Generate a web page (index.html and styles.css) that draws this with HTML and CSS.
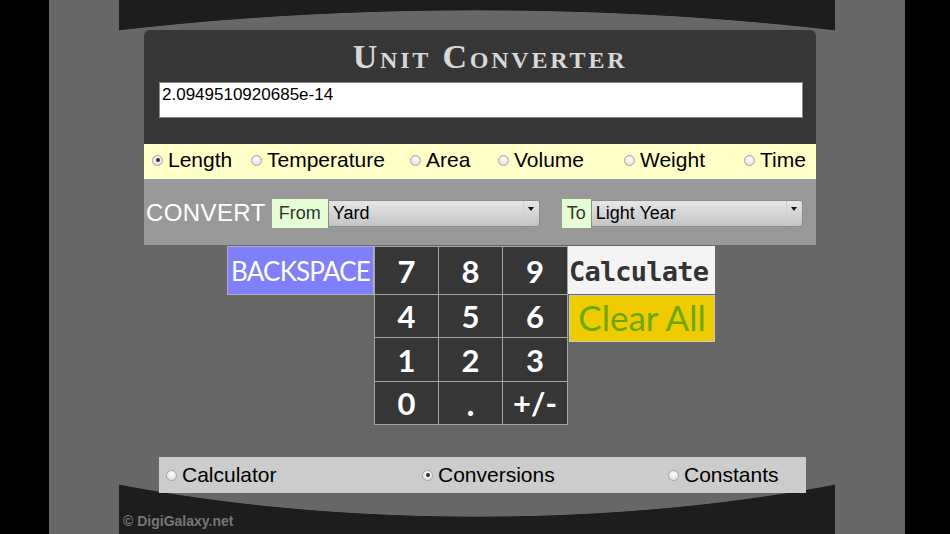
FILE: index.html
```html
<!DOCTYPE html>
<html lang="en">

<head>
    <meta charset="UTF-8">
    <meta name="viewport" content="width=device-width, initial-scale=1.0">
    <title>Unit Converter</title>
    <link rel="stylesheet" href="styles.css">
</head>

<body>
    <div class="screen">
        <div class="frame">
            <div class="app">
                <div class="header">
                    <h1 class="title">Unit Converter</h1>
                    <div class="display">2.0949510920685e-14</div>
                </div>

                <div class="types">
                    <label class="opt"><span class="radio on"></span>Length</label>
                    <label class="opt"><span class="radio"></span>Temperature</label>
                    <label class="opt"><span class="radio"></span>Area</label>
                    <label class="opt"><span class="radio"></span>Volume</label>
                    <label class="opt"><span class="radio"></span>Weight</label>
                    <label class="opt"><span class="radio"></span>Time</label>
                </div>

                <div class="convert">
                    <span class="convert-label">CONVERT</span>
                    <span class="tag">From</span>
                    <div class="select">
                        <span>Yard</span>
                        <span class="arrow"></span>
                    </div>
                    <span class="tag to">To</span>
                    <div class="select">
                        <span>Light Year</span>
                        <span class="arrow"></span>
                    </div>
                </div>
            </div>

            <div class="pad">
                <button class="backspace">BACKSPACE</button>
                <div class="keys">
                    <button class="key">7</button>
                    <button class="key">8</button>
                    <button class="key">9</button>
                    <button class="key">4</button>
                    <button class="key">5</button>
                    <button class="key">6</button>
                    <button class="key">1</button>
                    <button class="key">2</button>
                    <button class="key">3</button>
                    <button class="key">0</button>
                    <button class="key dot">.</button>
                    <button class="key">+/-</button>
                </div>
                <div class="actions">
                    <button class="calculate">Calculate</button>
                    <button class="clear">Clear All</button>
                </div>
            </div>

            <div class="modes">
                <label class="opt"><span class="radio"></span>Calculator</label>
                <label class="opt"><span class="radio on"></span>Conversions</label>
                <label class="opt"><span class="radio"></span>Constants</label>
            </div>

            <div class="copyright">© DigiGalaxy.net</div>
        </div>
    </div>
</body>

</html>
```

FILE: styles.css
```css
* {
    box-sizing: border-box;
}

body {
    margin: 0;
    background-color: black;
    font-family: "Liberation Sans", Arial, sans-serif;
}

.screen {
    width: 856px;
    height: 534px;
    margin-left: 49px;
    background-color: #676767;
    overflow: hidden;
}

/* dark band with the grey oval cut out of it, top and bottom curves differ */
.frame {
    width: 716px;
    height: 534px;
    margin-left: 70px;
    padding-top: 30px;
    background:
        radial-gradient(ellipse 921px 254px at 358px 264px, #676767 99.7%, #1d1d1d 100%) 0 0 / 716px 264px no-repeat,
        radial-gradient(ellipse 737px 254px at 358px -1px, #676767 99.7%, #1d1d1d 100%) 0 264px / 716px 270px no-repeat;
}

.app {
    width: 672px;
    margin-left: 25px;
}

.header {
    height: 114px;
    background-color: #363636;
    border-radius: 6px 6px 0 0;
    padding: 9px 13px 0 15px;
}

.title {
    margin: 0 0 7px 18px;
    text-align: center;
    font-family: "Liberation Serif", serif;
    font-variant: small-caps;
    font-weight: bold;
    font-size: 34px;
    line-height: 36px;
    letter-spacing: 2.8px;
    color: #d8d8d8;
}

.display {
    height: 36px;
    background-color: white;
    border: 1px solid #8a8a8a;
    padding: 2px 2px;
    font-size: 17px;
    line-height: 20px;
    color: black;
}

/* radio rows */
.opt {
    display: flex;
    align-items: center;
    font-size: 21px;
    color: black;
}

.radio {
    width: 11px;
    height: 11px;
    margin-right: 5px;
    border-radius: 50%;
    border: 1px solid #a5a5a5;
    background: radial-gradient(circle at 50% 35%, #ffffff, #d8d8d8);
    display: flex;
    align-items: center;
    justify-content: center;
}

.radio.on::after {
    content: "";
    width: 4px;
    height: 4px;
    border-radius: 50%;
    background-color: #333;
}

.types {
    height: 35px;
    background-color: #ffffc8;
    display: grid;
    grid-template-columns: 99px 159px 88px 126px 120px auto;
    align-items: center;
    padding: 0 0 3px 8px;
}

.convert {
    height: 66px;
    background-color: #999999;
    display: flex;
    align-items: center;
    padding: 2px 0 0 2px;
}

.convert-label {
    font-size: 24px;
    letter-spacing: 0.4px;
    color: white;
    margin-right: 6px;
}

.tag {
    height: 29px;
    padding: 0 7px;
    background-color: #e4fdd2;
    color: #333;
    font-size: 18px;
    line-height: 29px;
}

.tag.to {
    margin-left: 22px;
    padding: 0 5px;
}

.select {
    width: 212px;
    height: 27px;
    display: flex;
    justify-content: space-between;
    align-items: center;
    padding-left: 4px;
    background: linear-gradient(#e6e6e6, #c4c4c4);
    border: 1px solid #8c8c8c;
    border-radius: 0 3px 3px 0;
    font-size: 18px;
    color: black;
}

.arrow {
    width: 16px;
    height: 25px;
    border-left: 1px solid #cfcfcf;
    position: relative;
}

.arrow::after {
    content: "";
    position: absolute;
    top: 6px;
    left: 4px;
    border-left: 3px solid transparent;
    border-right: 3px solid transparent;
    border-top: 4px solid #111;
}

/* keypad */
.pad {
    display: flex;
    align-items: flex-start;
    margin: 1px 0 0 108px;
}

button {
    font-family: Lato, "Liberation Sans", sans-serif;
    padding: 0;
    margin: 0;
}

.backspace {
    width: 147px;
    height: 49px;
    background-color: #8080ff;
    border: 1px solid #b0b0b0;
    color: white;
    font-size: 26px;
    letter-spacing: -0.8px;
    white-space: nowrap;
}

.keys {
    width: 194px;
    display: grid;
    grid-template-columns: 63px 63px 64px;
    grid-template-rows: 47px 42px 43px 42px;
    gap: 1px;
    padding: 1px;
    background-color: #a6a6a6;
}

.key {
    background-color: #363636;
    border: none;
    color: white;
    font-size: 31px;
    font-weight: bold;
}

.key.dot {
    font-size: 34px;
    line-height: 20px;
}

.actions {
    display: flex;
    flex-direction: column;
    align-items: flex-end;
}

.calculate {
    width: 147px;
    height: 48px;
    background-color: #f4f4f4;
    border: none;
    font-family: "DejaVu Sans Mono", monospace;
    font-weight: bold;
    font-size: 27px;
    letter-spacing: -0.8px;
    color: #333;
    text-align: left;
    padding: 2px 0 0 1px;
    white-space: nowrap;
    overflow: visible;
}

.clear {
    width: 146px;
    height: 47px;
    margin-top: 1px;
    background-color: #efcc00;
    border: 1px solid #c8c8c8;
    color: #6aa800;
    font-size: 35px;
    padding-bottom: 3px;
    white-space: nowrap;
}

/* bottom mode bar */
.modes {
    width: 647px;
    height: 36px;
    margin: 32px 0 0 40px;
    background-color: #cccccc;
    display: grid;
    grid-template-columns: 256px 246px auto;
    align-items: center;
    padding-left: 7px;
}

.copyright {
    margin: 20px 0 0 4px;
    font-size: 14px;
    font-weight: bold;
    color: #777;
}
```
